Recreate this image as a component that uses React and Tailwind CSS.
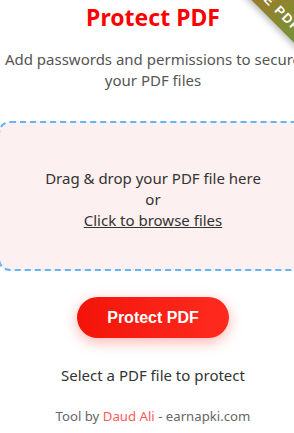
import React from "react";

export default function App() {
  return (
    <div className="w-[294px] h-[433px] overflow-hidden bg-white">
      <div
        className="relative w-[310px] ml-[-2px] overflow-hidden flex flex-col items-center text-center"
        style={{ fontFamily: '"Noto Sans", "Open Sans", sans-serif' }}
      >
        <div
          className="absolute left-[200.6px] top-[-16px] w-[150px] h-[32px] rotate-45 bg-gradient-to-r from-[#b0601c] to-[#5f9d3c] text-white font-bold text-[13px] leading-[20px] pt-[10px] tracking-[1.5px] shadow-[0_3px_6px_rgba(0,0,0,0.25)]"
          style={{ fontFamily: '"Liberation Sans", Arial, sans-serif' }}
        >
          FREE PDF
        </div>
        <h1 className="mt-px text-[23px] leading-[32px] font-bold text-[#ff0000]">Protect PDF</h1>
        <p className="mt-[16px] text-[15px] leading-[21px] text-[#555555] whitespace-nowrap">
          Add passwords and permissions to secure
          <br />
          your PDF files
        </p>
        <div className="mt-[30px] w-full h-[150px] rounded-[12px] border-2 border-dashed border-[#64b5f6] bg-[#fdf0f0] pt-[45px] text-[15px] leading-[21px] text-[#333333]">
          <p>Drag &amp; drop your PDF file here</p>
          <p>or</p>
          <p className="underline">Click to browse files</p>
        </div>
        <button
          className="mt-[26px] h-[41px] w-[152px] rounded-full bg-gradient-to-r from-[#f31308] to-[#ff2a1e] text-white text-[16px] font-bold shadow-[0_4px_14px_rgba(255,40,30,0.35)]"
          style={{ fontFamily: '"Liberation Sans", Arial, sans-serif' }}
        >
          Protect PDF
        </button>
        <p className="mt-[27px] text-[15px] leading-[21px] text-[#333333]">Select a PDF file to protect</p>
        <p className="mt-[21px] text-[13.2px] leading-[18px] text-[#666666]">
          Tool by <span className="text-[#ff5a5a]">Daud Ali</span> - earnapki.com
        </p>
      </div>
    </div>
  );
}
